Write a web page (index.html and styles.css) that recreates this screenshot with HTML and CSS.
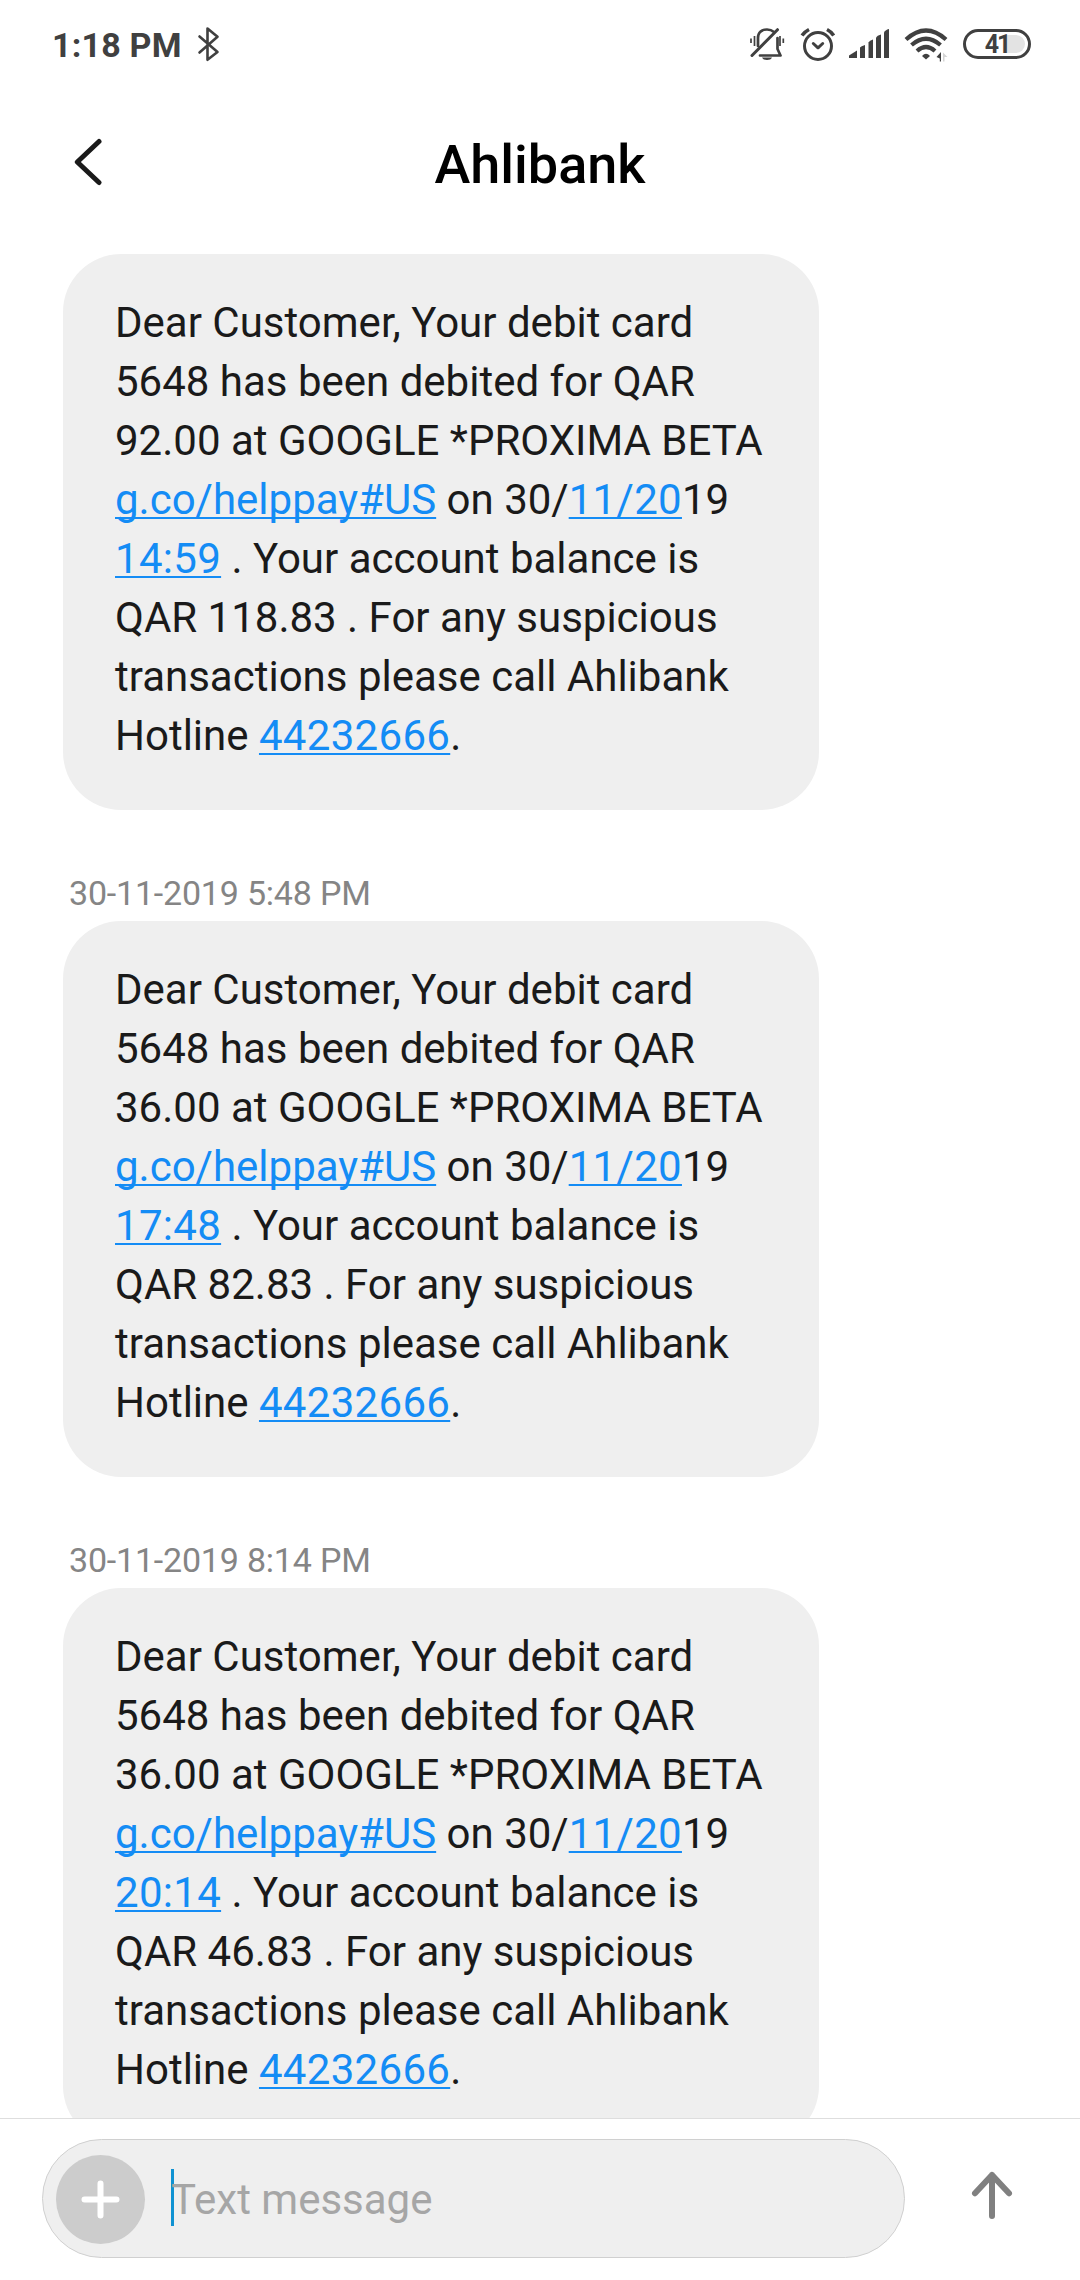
FILE: index.html
```html
<!DOCTYPE html>
<html lang="en">
<head>
<meta charset="utf-8">
<title>Ahlibank</title>
<link rel="stylesheet" href="styles.css">
</head>
<body>
<div class="screen">
  <div class="status">
    <span class="clock">1:18 PM</span>
    <svg class="bluetooth" width="24" height="38" viewBox="197 25 24 38"><path d="M199.500 36.500L217.500 52L207.500 59.800V28.500L217.500 36.800L199.500 52.500" fill="none" stroke="#404040" stroke-width="2.600" stroke-linecap="round" stroke-linejoin="round"/></svg>
    <svg class="muted" width="38" height="38" viewBox="748 25 38 38">
      <g fill="none" stroke="#404040" stroke-width="2.700" stroke-linecap="round" stroke-linejoin="round">
        <path d="M758 46V38C758 32 762 29.500 767 29.500C770 29.500 772 30.300 774 32"/>
        <path d="M777.500 38V49L780.500 55.500H760"/>
        <path d="M752 55.500L777.500 29.700" stroke-width="3"/>
      </g>
      <path d="M762 57.500H772C771 59.300 769.500 60 767 60S763 59.300 762 57.500Z" fill="#404040"/>
      <path d="M751 38.500V43M754.500 36V46M780 36V46M783.300 38.500V43" stroke="#404040" stroke-width="1.700"/>
    </svg>
    <svg class="alarm" width="38" height="38" viewBox="799 25 38 38">
      <g fill="none" stroke="#404040" stroke-width="3" stroke-linecap="round" stroke-linejoin="round">
        <circle cx="818" cy="46" r="13.500"/>
        <path d="M813.300 43.500L818 47.800L822.700 43.500"/>
        <path d="M802 35.500Q805 31.500 809 29.500M827 29.500Q831 31.500 833.700 35.500" stroke-width="3.600" stroke-linecap="butt"/>
      </g>
    </svg>
    <svg class="signal" width="42" height="38" viewBox="848 25 42 38" fill="#404040">
      <path d="M849 58V55.500L857 50.500V58Z"/>
      <path d="M860 58V47.500Q861 46 865 45V58Z"/>
      <path d="M868.500 58V42.500Q869.500 40.500 873 39.500V58Z"/>
      <path d="M876 58V37.500Q877 35.500 881 34.500V58Z"/>
      <path d="M884 58V32.500Q885 30 889 29V58Z"/>
    </svg>
    <svg class="wifi" width="44" height="38" viewBox="904 25 44 38">
      <g fill="none" stroke="#404040" stroke-width="4.200">
        <path d="M906 39.500Q926 21.500 946 39.500"/>
        <path d="M911.500 45Q926 32.500 940.500 45"/>
        <path d="M917 51Q926 43 935 51"/>
      </g>
      <path d="M922 56Q926 51.500 930 56L926 59.500Z" fill="#404040"/>
      <path d="M941 52V61.500H939.800V58.500L936.500 57Z" fill="#404040"/>
      <path d="M943 61.500V52.500L947.500 57H944.500V61.500Z" fill="#d5d5d5"/>
    </svg>
    <div class="battery"><span class="charge"></span><span class="level">41</span></div>
  </div>

  <header class="header">
    <svg class="back" width="33" height="50" viewBox="69 137 33 50"><path d="M99 141.500L77.300 162L99 182.500" fill="none" stroke="#1a1a1a" stroke-width="5" stroke-linecap="round" stroke-linejoin="round"/></svg>
    <h1 class="title">Ahlibank</h1>
  </header>

  <main class="thread">
    <p class="bubble">Dear Customer, Your debit card 5648 has been debited for QAR 92.00 at GOOGLE *PROXIMA BETA <a>g.co/helppay#US</a> on 30/<a class="number">11/20</a>19 <a class="number">14:59</a> . Your account balance is QAR 118.83 . For any suspicious transactions please call Ahlibank Hotline <a class="number">44232666</a>.</p>
    <time class="stamp">30-11-2019 5:48 PM</time>
    <p class="bubble">Dear Customer, Your debit card 5648 has been debited for QAR 36.00 at GOOGLE *PROXIMA BETA <a>g.co/helppay#US</a> on 30/<a class="number">11/20</a>19 <a class="number">17:48</a> . Your account balance is QAR 82.83 . For any suspicious transactions please call Ahlibank Hotline <a class="number">44232666</a>.</p>
    <time class="stamp">30-11-2019 8:14 PM</time>
    <p class="bubble">Dear Customer, Your debit card 5648 has been debited for QAR 36.00 at GOOGLE *PROXIMA BETA <a>g.co/helppay#US</a> on 30/<a class="number">11/20</a>19 <a class="number">20:14</a> . Your account balance is QAR 46.83 . For any suspicious transactions please call Ahlibank Hotline <a class="number">44232666</a>.</p>
  </main>

  <footer class="composer">
    <div class="field">
      <div class="add"><svg width="89" height="89" viewBox="0 0 89 89"><path d="M28.500 44.500H60.500M44.500 28.500V60.500" stroke="#fff" stroke-width="6" stroke-linecap="round"/></svg></div>
      <span class="caret"></span>
      <span class="placeholder">Text message</span>
    </div>
    <svg class="send" width="44" height="52" viewBox="970 2170 44 52"><path d="M992 2216V2175M975 2193.300L992 2175L1009 2193.300" fill="none" stroke="#808080" stroke-width="6" stroke-linecap="round" stroke-linejoin="round"/></svg>
  </footer>
</div>
</body>
</html>
```
FILE: styles.css
```css
* { box-sizing: border-box; }

body {
  margin: 0;
  background: #fff;
  font-family: Roboto, "Liberation Sans", sans-serif;
}

.screen {
  display: flex;
  flex-direction: column;
  width: 1080px;
  height: 2280px;
  overflow: hidden;
}

.status {
  display: flex;
  flex: none;
  align-items: center;
  height: 88px;
  padding: 0 49px 0 52px;
}

.clock {
  width: 145px;
  padding-top: 2px;
  color: #404040;
  font-size: 34px;
  font-weight: 700;
  line-height: 40px;
  letter-spacing: 0.2px;
  white-space: nowrap;
}

.muted { margin-left: auto; }
.alarm { margin-left: 13px; }
.signal { margin-left: 11px; }
.wifi { margin-left: 14px; }

.battery {
  position: relative;
  display: flex;
  align-items: center;
  justify-content: center;
  width: 68px;
  height: 30px;
  margin-left: 15px;
  border: 3px solid #404040;
  border-radius: 15px;
}

.charge {
  position: absolute;
  top: 3px;
  right: 3px;
  width: 20px;
  height: 18px;
  border-radius: 0 9px 9px 0;
  background: #e3e3e3;
}

.level {
  position: relative;
  color: #404040;
  font-size: 25px;
  font-weight: 700;
  line-height: 25px;
  letter-spacing: -2px;
}

.header {
  display: grid;
  flex: none;
  grid-template-columns: 80px 1fr 80px;
  align-items: center;
  height: 148px;
  padding: 0 69px;
}

.title {
  margin: 6px 0 0;
  color: #000;
  font-size: 54px;
  font-weight: 500;
  line-height: 64px;
  text-align: center;
}

.thread {
  display: flex;
  flex: 1;
  flex-direction: column;
  align-items: flex-start;
  min-height: 0;
  padding: 18px 63px 0;
  overflow: hidden;
}

.bubble {
  flex: none;
  width: 756px;
  height: 556px;
  margin: 0;
  padding: 39px 48px 45px 52px;
  border-radius: 58px;
  background: #efefef;
  color: #1a1a1a;
  font-size: 42px;
  line-height: 59px;
}

.bubble a {
  color: #148cf5;
  text-decoration: underline;
  text-decoration-thickness: 2px;
  text-decoration-skip-ink: none;
  text-underline-offset: 3px;
}

.bubble .number { letter-spacing: 0.3px; }

.stamp {
  flex: none;
  height: 111px;
  padding: 62px 0 0 6px;
  color: #858585;
  font-size: 34px;
  line-height: 42px;
  letter-spacing: -0.2px;
}

.composer {
  display: flex;
  flex: none;
  align-items: center;
  height: 162px;
  padding: 0 66px 2px 42px;
  border-top: 1px solid #dedede;
}

.field {
  display: flex;
  align-items: center;
  width: 863px;
  height: 119px;
  padding-left: 13px;
  border: 1px solid #d0d0d0;
  border-radius: 60px;
  background: #efefef;
}

.add {
  width: 89px;
  height: 89px;
  margin-top: 2px;
  border-radius: 50%;
  background: #ccc;
}

.add svg { display: block; }

.caret {
  width: 3px;
  height: 57px;
  margin: 0 -3px 2px 26px;
  background: #0f92d2;
}

.placeholder {
  padding-top: 2px;
  color: #a6a6a6;
  font-size: 42px;
  line-height: 50px;
}

.send {
  margin: 0 0 5px auto;
}
```
